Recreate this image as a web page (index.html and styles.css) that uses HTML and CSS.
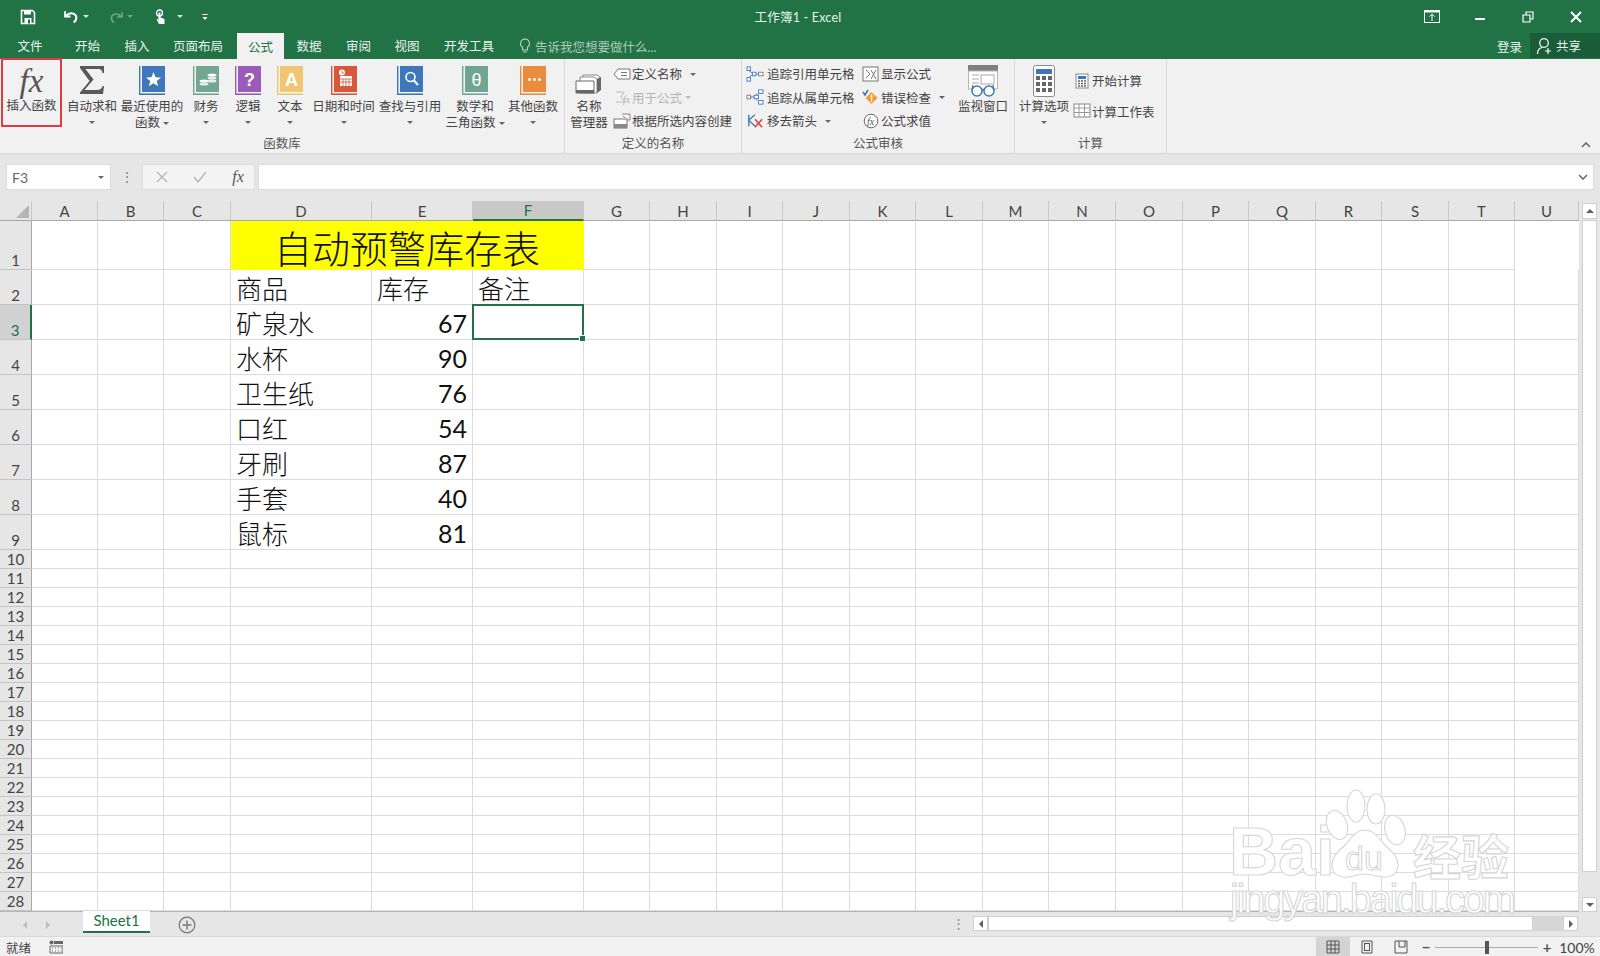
FILE: index.html
```html
<!DOCTYPE html>
<html lang="zh-CN">
<head>
<meta charset="utf-8">
<title>工作簿1 - Excel</title>
<link rel="stylesheet" href="styles.css">
</head>
<body>
<svg class="defs" width="0" height="0">
  <symbol id="book" viewBox="0 0 26 30">
    <rect width="1.4" height="28" fill="currentColor"/>
    <rect x="3" width="23" height="26" fill="currentColor"/>
    <rect x="1.4" y="26" width="24.6" height="1" fill="#fff" opacity=".7"/>
    <rect y="27.4" width="26" height="1.6" fill="currentColor"/>
  </symbol>
</svg>
<div class="app">
  <header class="titlebar">
    <div class="qat">
      <svg class="ti t-save" viewBox="0 0 16 16"><path d="M1.5 1.5h11l2 2v11h-13z" fill="none" stroke="#fff" stroke-width="1.6"/><rect x="4" y="1.5" width="7" height="4" fill="#fff"/><rect x="4.5" y="9" width="7" height="5.5" fill="#fff"/><rect x="8" y="10.5" width="2" height="4" fill="#217346"/></svg>
      <svg class="ti t-undo" viewBox="0 0 16 16"><path d="M2 3v5h5" fill="none" stroke="#fff" stroke-width="1.8"/><path d="M3 7.5c2-3 7-3.500 9-.5 1.200 2 .5 5-2 6.500" fill="none" stroke="#fff" stroke-width="2"/></svg>
      <i class="tcaret c-undo"></i>
      <svg class="ti t-redo" viewBox="0 0 16 16"><path d="M14 3v5H9" fill="none" stroke="#6fa587" stroke-width="1.6"/><path d="M13 7.500c-2-3-7-3.500-9-.5-1.200 2-.5 5 2 6.500" fill="none" stroke="#6fa587" stroke-width="1.600"/></svg>
      <i class="tcaret dim c-redo"></i>
      <svg class="ti t-touch" viewBox="0 0 16 16"><circle cx="6.500" cy="4" r="3" fill="none" stroke="#fff" stroke-width="1.300"/><path d="M5.500 3.500h2v5l4 1.500v5H6L3.500 10l2 .5z" fill="#fff"/></svg>
      <i class="tcaret c-touch"></i>
      <svg class="ti t-more" viewBox="0 0 10 10"><rect x="2.500" y="2" width="5" height="1" fill="#fff"/><path d="M2.500 5h5L5 8z" fill="#fff"/></svg>
    </div>
    <div class="doc-title">工作簿1 - Excel</div>
    <div class="winbtns">
      <svg class="wb" viewBox="0 0 16 14"><rect x=".5" y=".5" width="15" height="12" fill="none" stroke="#fff"/><rect x="1" y="1" width="14" height="1.500" fill="#fff"/><path d="M8 4v7M5.500 6.500 8 4l2.500 2.500" fill="none" stroke="#fff"/></svg>
      <svg class="wb" viewBox="0 0 16 14"><rect x="3" y="8" width="10" height="2" fill="#fff"/></svg>
      <svg class="wb" viewBox="0 0 16 14"><path d="M3 5h7v7H3zM6 5V2h7v7h-3" fill="none" stroke="#fff" stroke-width="1.200"/></svg>
      <svg class="wb" viewBox="0 0 16 14"><path d="M3 2l10 10M13 2 3 12" stroke="#fff" stroke-width="2"/></svg>
    </div>
  </header>

  <nav class="tabs">
    <span class="tab">文件</span>
    <span class="tab">开始</span>
    <span class="tab">插入</span>
    <span class="tab">页面布局</span>
    <span class="tab active">公式</span>
    <span class="tab">数据</span>
    <span class="tab">审阅</span>
    <span class="tab">视图</span>
    <span class="tab">开发工具</span>
    <span class="tellme">
      <svg class="bulb" viewBox="0 0 12 16"><path d="M6 1a4.500 4.500 0 0 0-2.500 8.200V12h5V9.200A4.500 4.500 0 0 0 6 1zM4 14h4" fill="none" stroke="#b9d3c4" stroke-width="1.100"/></svg>
      告诉我您想要做什么...
    </span>
    <span class="login">登录</span>
    <span class="share">
      <svg class="shareicon" viewBox="0 0 18 18"><circle cx="8" cy="6" r="4.300" fill="none" stroke="#fff" stroke-width="1.200"/><path d="M1.500 17c0-4 2-6 4.500-6.500M12 11v6M9 14h6" fill="none" stroke="#fff" stroke-width="1.200"/></svg>
      共享
    </span>
  </nav>

  <section class="ribbon">
    <div class="group g-lib">
      <div class="lib-btns">
        <div class="btn insert">
          <span class="fx-big">fx</span>
          <span class="lbl">插入函数</span>
        </div>
        <div class="btn">
          <svg class="icon sigma" viewBox="0 0 26 28"><path d="M1 0h24v7h-1.500c-.5-2.500-1.500-4-4-4H6.500l8 10.500L5.500 24H18c3 0 5-1.500 5.500-4H25l-1 8H1v-1.500L10.500 15 1 2z" fill="#595959"/></svg>
          <span class="lbl">自动求和</span>
          <i class="caret"></i>
        </div>
        <div class="btn">
          <svg class="icon book b-blue" viewBox="0 0 26 30"><use href="#book"/><path d="M14.500 6l2 5.200 5.500.3-4.300 3.400 1.500 5.400-4.700-3-4.700 3 1.500-5.400L7 11.500l5.500-.3z" fill="#fff"/></svg>
          <span class="lbl">最近使用的</span>
          <span class="lbl">函数<i class="caret inl"></i></span>
        </div>
        <div class="btn">
          <svg class="icon book b-green" viewBox="0 0 26 30"><use href="#book"/><g fill="#fff"><ellipse cx="19" cy="9" rx="4.500" ry="1.600"/><ellipse cx="19" cy="12" rx="4.500" ry="1.600" opacity=".8"/><ellipse cx="19" cy="15" rx="4.500" ry="1.600" opacity=".8"/><ellipse cx="11" cy="15" rx="4.500" ry="1.600"/><ellipse cx="11" cy="18" rx="4.500" ry="1.600" opacity=".8"/></g></svg>
          <span class="lbl">财务</span>
          <i class="caret"></i>
        </div>
        <div class="btn">
          <svg class="icon book b-purple" viewBox="0 0 26 30"><use href="#book"/><text x="14.500" y="20" class="bk-t bold">?</text></svg>
          <span class="lbl">逻辑</span>
          <i class="caret"></i>
        </div>
        <div class="btn">
          <svg class="icon book b-yellow" viewBox="0 0 26 30"><use href="#book"/><text x="14.500" y="20" class="bk-t bold">A</text></svg>
          <span class="lbl">文本</span>
          <i class="caret"></i>
        </div>
        <div class="btn">
          <svg class="icon book b-red" viewBox="0 0 26 30"><use href="#book"/><circle cx="11" cy="6.500" r="3" fill="#fff"/><path d="M11 5v2h2" stroke="#d9573a" fill="none" stroke-width=".8"/><rect x="9" y="10" width="12" height="10" fill="#fff"/><path d="M9 13h12M9 16h12M12 13v7M15 13v7M18 13v7" stroke="#d9573a" stroke-width=".8"/></svg>
          <span class="lbl">日期和时间</span>
          <i class="caret"></i>
        </div>
        <div class="btn">
          <svg class="icon book b-blue" viewBox="0 0 26 30"><use href="#book"/><circle cx="13.500" cy="11" r="4.500" fill="none" stroke="#fff" stroke-width="1.600"/><path d="M17 14.500l4 4.500" stroke="#fff" stroke-width="2"/></svg>
          <span class="lbl">查找与引用</span>
          <i class="caret"></i>
        </div>
        <div class="btn">
          <svg class="icon book b-teal" viewBox="0 0 26 30"><use href="#book"/><text x="14.500" y="19.500" class="bk-t">θ</text></svg>
          <span class="lbl">数学和</span>
          <span class="lbl">三角函数<i class="caret inl"></i></span>
        </div>
        <div class="btn">
          <svg class="icon book b-orange" viewBox="0 0 26 30"><use href="#book"/><circle cx="9.500" cy="13.500" r="1.500" fill="#fff"/><circle cx="14.500" cy="13.500" r="1.500" fill="#fff"/><circle cx="19.500" cy="13.500" r="1.500" fill="#fff"/></svg>
          <span class="lbl">其他函数</span>
          <i class="caret"></i>
        </div>
      </div>
      <div class="glabel">函数库</div>
    </div>

    <div class="group g-names">
      <div class="gbody">
        <div class="btn nm">
          <svg class="icon nmicon" viewBox="0 0 30 30"><path d="M9 7h14l3 2v12H9z" fill="#fff" stroke="#8a8a8a"/><path d="M6 9h14l3 2v14H6z" fill="#fff" stroke="#8a8a8a"/><path d="M2 13h18v12H2z" fill="#fff" stroke="#666"/><path d="M23 11v14l4-3V9z" fill="#666"/><rect x="2" y="22" width="18" height="3" fill="#666"/></svg>
          <span class="lbl">名称</span>
          <span class="lbl">管理器</span>
        </div>
        <div class="smalls">
          <div class="sm"><svg class="si" viewBox="0 0 18 16"><path d="M5 3h12v10H5L1 8z" fill="#fff" stroke="#777"/><path d="M8 6.500h6M8 9.500h6" stroke="#777"/></svg>定义名称<i class="caret inl wide"></i></div>
          <div class="sm off"><svg class="si" viewBox="0 0 18 16"><path d="M3 3h8L8 8l4 5H3" fill="none" stroke="#bbb"/><text x="10" y="14" class="si-t off-t">fx</text></svg>用于公式<i class="caret inl off-c"></i></div>
          <div class="sm"><svg class="si" viewBox="0 0 18 16"><rect x="1" y="6" width="13" height="9" fill="#fff" stroke="#777"/><rect x="1" y="11" width="13" height="4" fill="#888"/><path d="M9 1h8v6h-3" fill="none" stroke="#888"/><path d="M10 3l2 2" stroke="#888"/></svg>根据所选内容创建</div>
        </div>
      </div>
      <div class="glabel">定义的名称</div>
    </div>

    <div class="group g-audit">
      <div class="gbody">
        <div class="smalls col-a">
          <div class="sm"><svg class="si" viewBox="0 0 20 18"><rect x="1" y="1" width="4" height="4" fill="#fff" stroke="#3f77ba"/><rect x="1" y="13" width="4" height="4" fill="#fff" stroke="#3f77ba"/><rect x="7" y="7" width="4" height="4" fill="#fff" stroke="#3f77ba"/><rect x="14" y="7" width="5" height="4" fill="#fff" stroke="#777"/><path d="M3 5l4 3M3 13l4-3M11 9h3" stroke="#3f77ba"/></svg>追踪引用单元格</div>
          <div class="sm"><svg class="si" viewBox="0 0 20 18"><rect x="1" y="7" width="4" height="4" fill="#fff" stroke="#777"/><rect x="14" y="1" width="5" height="4" fill="#fff" stroke="#3f77ba"/><rect x="14" y="13" width="5" height="4" fill="#fff" stroke="#3f77ba"/><rect x="9" y="7" width="5" height="4" fill="#fff" stroke="#3f77ba"/><path d="M5 9h4M12 5v2M12 11v2" stroke="#3f77ba"/></svg>追踪从属单元格</div>
          <div class="sm"><svg class="si" viewBox="0 0 20 18"><path d="M3 2v13M3 8l7-6M3 8l7 7" stroke="#3f77ba" stroke-width="1.500" fill="none"/><path d="M10 7l8 9M18 7l-8 9" stroke="#d9473a" stroke-width="1.800"/></svg>移去箭头<i class="caret inl wide"></i></div>
        </div>
        <div class="smalls col-b">
          <div class="sm"><svg class="si" viewBox="0 0 18 16"><rect x="1" y="1" width="15" height="14" fill="#fff" stroke="#777"/><path d="M4 4l4 4-4 4M9 4l5 9M14 4l-5 9" stroke="#777" fill="none"/></svg>显示公式</div>
          <div class="sm"><svg class="si" viewBox="0 0 18 16"><path d="M9.500 3l6 6-6 6-6-6z" fill="#f0a030"/><rect x="8.800" y="5.500" width="1.500" height="5" fill="#fff"/><rect x="8.800" y="11.300" width="1.500" height="1.500" fill="#fff"/><path d="M1 3l2 3 3-5" stroke="#3f77ba" stroke-width="1.600" fill="none"/></svg>错误检查<i class="caret inl wide"></i></div>
          <div class="sm"><svg class="si" viewBox="0 0 18 16"><circle cx="9" cy="8" r="6.800" fill="#fff" stroke="#666"/><text x="5" y="12" class="si-t">fx</text></svg>公式求值</div>
        </div>
        <div class="btn watch">
          <svg class="icon wicon" viewBox="0 0 30 32"><rect width="30" height="6" fill="#7f7f7f"/><rect x=".5" y="6" width="29" height="18" fill="#fff" stroke="#b5b5b5"/><path d="M4 10h7M4 14h7M4 18h7" stroke="#aaa"/><rect x="13" y="10" width="13" height="9" fill="none" stroke="#aaa"/><circle cx="9" cy="26" r="5" fill="#fff" stroke="#3f77ba" stroke-width="1.500"/><circle cx="21" cy="26" r="5" fill="#fff" stroke="#3f77ba" stroke-width="1.500"/><path d="M14 25h2M4 25l1-5M26 25l-1-5" stroke="#3f77ba" stroke-width="1.300"/></svg>
          <span class="lbl">监视窗口</span>
        </div>
      </div>
      <div class="glabel">公式审核</div>
    </div>

    <div class="group g-calc">
      <div class="gbody">
        <div class="btn calc">
          <svg class="icon cicon" viewBox="0 0 22 32"><rect x=".5" y=".5" width="21" height="31" rx="2" fill="#fff" stroke="#8a8a8a"/><rect x="3" y="4" width="16" height="5" fill="#3f77ba"/><g fill="#666"><rect x="3" y="11" width="4" height="4"/><rect x="9" y="11" width="4" height="4"/><rect x="15" y="11" width="4" height="4"/><rect x="3" y="17" width="4" height="4"/><rect x="9" y="17" width="4" height="4"/><rect x="15" y="17" width="4" height="4"/><rect x="3" y="23" width="4" height="4"/><rect x="9" y="23" width="4" height="4"/><rect x="15" y="23" width="4" height="4"/></g></svg>
          <span class="lbl">计算选项</span>
          <i class="caret"></i>
        </div>
        <div class="smalls calc-s">
          <div class="sm"><svg class="si" viewBox="0 0 18 16"><rect x="3" y="1" width="12" height="14" fill="#fff" stroke="#888"/><rect x="5" y="3" width="8" height="3" fill="#3f77ba"/><path d="M5 8h8M5 10.500h8M5 13h8" stroke="#666" stroke-width="1.300" stroke-dasharray="2 1"/></svg>开始计算</div>
          <div class="sm"><svg class="si" viewBox="0 0 18 16"><rect x="1" y="1" width="16" height="13" fill="#fff" stroke="#888"/><path d="M1 5h16M1 9.500h16M6 1v13M11.500 1v13" stroke="#999"/></svg>计算工作表</div>
        </div>
      </div>
      <div class="glabel">计算</div>
    </div>
    <svg class="collapse" viewBox="0 0 10 6"><path d="M1 5l4-4 4 4" fill="none" stroke="#666" stroke-width="1.500"/></svg>
  </section>

  <section class="fbar">
    <div class="namebox">F3<i class="caret"></i></div>
    <span class="fdots">⋮</span>
    <div class="fbtns">
      <svg class="fb" viewBox="0 0 12 12"><path d="M1 1l10 10M11 1 1 11" stroke="#b8b8b8" stroke-width="1.400"/></svg>
      <svg class="fb" viewBox="0 0 14 12"><path d="M1 6l4 5 8-10" fill="none" stroke="#b8b8b8" stroke-width="1.500"/></svg>
      <span class="fxs">fx</span>
    </div>
    <div class="finput"><svg class="fdown" viewBox="0 0 10 6"><path d="M1 1l4 4 4-4" fill="none" stroke="#666" stroke-width="1.500"/></svg></div>
  </section>

  <section class="sheet">
    <div class="gridwrap">
      <table class="grid">
        <colgroup>
          <col class="w32"><col class="w66"><col class="w66"><col class="w67"><col class="w141"><col class="w101"><col class="w111"><col class="w66"><col class="w67"><col class="w66"><col class="w67"><col class="w66"><col class="w67"><col class="w66"><col class="w67"><col class="w67"><col class="w66"><col class="w67"><col class="w66"><col class="w67"><col class="w66"><col class="w64">
        </colgroup>
        <thead>
          <tr><th class="corner"><i></i></th><th>A</th><th>B</th><th>C</th><th>D</th><th>E</th><th class="sel-col">F</th><th>G</th><th>H</th><th>I</th><th>J</th><th>K</th><th>L</th><th>M</th><th>N</th><th>O</th><th>P</th><th>Q</th><th>R</th><th>S</th><th>T</th><th>U</th></tr>
        </thead>
        <tbody>
          <tr class="r1"><th class="bt">1</th><td></td><td></td><td></td><td colspan="3" class="banner">自动预警库存表</td><td></td><td></td><td></td><td></td><td></td><td></td><td></td><td></td><td></td><td></td><td></td><td></td><td></td><td></td></tr>
          <tr class="r2"><th class="bt">2</th><td></td><td></td><td></td><td class="v">商品</td><td class="v">库存</td><td class="v">备注</td><td></td><td></td><td></td><td></td><td></td><td></td><td></td><td></td><td></td><td></td><td></td><td></td><td></td><td></td><td></td></tr>
          <tr class="r2"><th class="bt sel-row">3</th><td></td><td></td><td></td><td class="v">矿泉水</td><td class="v n">67</td><td class="active-cell"></td><td></td><td></td><td></td><td></td><td></td><td></td><td></td><td></td><td></td><td></td><td></td><td></td><td></td><td></td><td></td></tr>
          <tr class="r2"><th class="bt">4</th><td></td><td></td><td></td><td class="v">水杯</td><td class="v n">90</td><td></td><td></td><td></td><td></td><td></td><td></td><td></td><td></td><td></td><td></td><td></td><td></td><td></td><td></td><td></td><td></td></tr>
          <tr class="r2"><th class="bt">5</th><td></td><td></td><td></td><td class="v">卫生纸</td><td class="v n">76</td><td></td><td></td><td></td><td></td><td></td><td></td><td></td><td></td><td></td><td></td><td></td><td></td><td></td><td></td><td></td><td></td></tr>
          <tr class="r2"><th class="bt">6</th><td></td><td></td><td></td><td class="v">口红</td><td class="v n">54</td><td></td><td></td><td></td><td></td><td></td><td></td><td></td><td></td><td></td><td></td><td></td><td></td><td></td><td></td><td></td><td></td></tr>
          <tr class="r2"><th class="bt">7</th><td></td><td></td><td></td><td class="v">牙刷</td><td class="v n">87</td><td></td><td></td><td></td><td></td><td></td><td></td><td></td><td></td><td></td><td></td><td></td><td></td><td></td><td></td><td></td><td></td></tr>
          <tr class="r2"><th class="bt">8</th><td></td><td></td><td></td><td class="v">手套</td><td class="v n">40</td><td></td><td></td><td></td><td></td><td></td><td></td><td></td><td></td><td></td><td></td><td></td><td></td><td></td><td></td><td></td><td></td></tr>
          <tr class="r2"><th class="bt">9</th><td></td><td></td><td></td><td class="v">鼠标</td><td class="v n">81</td><td></td><td></td><td></td><td></td><td></td><td></td><td></td><td></td><td></td><td></td><td></td><td></td><td></td><td></td><td></td><td></td></tr>
          <tr><th>10</th><td></td><td></td><td></td><td></td><td></td><td></td><td></td><td></td><td></td><td></td><td></td><td></td><td></td><td></td><td></td><td></td><td></td><td></td><td></td><td></td><td></td></tr>
          <tr><th>11</th><td></td><td></td><td></td><td></td><td></td><td></td><td></td><td></td><td></td><td></td><td></td><td></td><td></td><td></td><td></td><td></td><td></td><td></td><td></td><td></td><td></td></tr>
          <tr><th>12</th><td></td><td></td><td></td><td></td><td></td><td></td><td></td><td></td><td></td><td></td><td></td><td></td><td></td><td></td><td></td><td></td><td></td><td></td><td></td><td></td><td></td></tr>
          <tr><th>13</th><td></td><td></td><td></td><td></td><td></td><td></td><td></td><td></td><td></td><td></td><td></td><td></td><td></td><td></td><td></td><td></td><td></td><td></td><td></td><td></td><td></td></tr>
          <tr><th>14</th><td></td><td></td><td></td><td></td><td></td><td></td><td></td><td></td><td></td><td></td><td></td><td></td><td></td><td></td><td></td><td></td><td></td><td></td><td></td><td></td><td></td></tr>
          <tr><th>15</th><td></td><td></td><td></td><td></td><td></td><td></td><td></td><td></td><td></td><td></td><td></td><td></td><td></td><td></td><td></td><td></td><td></td><td></td><td></td><td></td><td></td></tr>
          <tr><th>16</th><td></td><td></td><td></td><td></td><td></td><td></td><td></td><td></td><td></td><td></td><td></td><td></td><td></td><td></td><td></td><td></td><td></td><td></td><td></td><td></td><td></td></tr>
          <tr><th>17</th><td></td><td></td><td></td><td></td><td></td><td></td><td></td><td></td><td></td><td></td><td></td><td></td><td></td><td></td><td></td><td></td><td></td><td></td><td></td><td></td><td></td></tr>
          <tr><th>18</th><td></td><td></td><td></td><td></td><td></td><td></td><td></td><td></td><td></td><td></td><td></td><td></td><td></td><td></td><td></td><td></td><td></td><td></td><td></td><td></td><td></td></tr>
          <tr><th>19</th><td></td><td></td><td></td><td></td><td></td><td></td><td></td><td></td><td></td><td></td><td></td><td></td><td></td><td></td><td></td><td></td><td></td><td></td><td></td><td></td><td></td></tr>
          <tr><th>20</th><td></td><td></td><td></td><td></td><td></td><td></td><td></td><td></td><td></td><td></td><td></td><td></td><td></td><td></td><td></td><td></td><td></td><td></td><td></td><td></td><td></td></tr>
          <tr><th>21</th><td></td><td></td><td></td><td></td><td></td><td></td><td></td><td></td><td></td><td></td><td></td><td></td><td></td><td></td><td></td><td></td><td></td><td></td><td></td><td></td><td></td></tr>
          <tr><th>22</th><td></td><td></td><td></td><td></td><td></td><td></td><td></td><td></td><td></td><td></td><td></td><td></td><td></td><td></td><td></td><td></td><td></td><td></td><td></td><td></td><td></td></tr>
          <tr><th>23</th><td></td><td></td><td></td><td></td><td></td><td></td><td></td><td></td><td></td><td></td><td></td><td></td><td></td><td></td><td></td><td></td><td></td><td></td><td></td><td></td><td></td></tr>
          <tr><th>24</th><td></td><td></td><td></td><td></td><td></td><td></td><td></td><td></td><td></td><td></td><td></td><td></td><td></td><td></td><td></td><td></td><td></td><td></td><td></td><td></td><td></td></tr>
          <tr><th>25</th><td></td><td></td><td></td><td></td><td></td><td></td><td></td><td></td><td></td><td></td><td></td><td></td><td></td><td></td><td></td><td></td><td></td><td></td><td></td><td></td><td></td></tr>
          <tr><th>26</th><td></td><td></td><td></td><td></td><td></td><td></td><td></td><td></td><td></td><td></td><td></td><td></td><td></td><td></td><td></td><td></td><td></td><td></td><td></td><td></td><td></td></tr>
          <tr><th>27</th><td></td><td></td><td></td><td></td><td></td><td></td><td></td><td></td><td></td><td></td><td></td><td></td><td></td><td></td><td></td><td></td><td></td><td></td><td></td><td></td><td></td></tr>
          <tr><th>28</th><td></td><td></td><td></td><td></td><td></td><td></td><td></td><td></td><td></td><td></td><td></td><td></td><td></td><td></td><td></td><td></td><td></td><td></td><td></td><td></td><td></td></tr>
        </tbody>
      </table>
    </div>
    <div class="vscroll">
      <div class="sbtn"><i class="tri up"></i></div>
      <div class="vthumb"></div>
      <div class="sbtn down"><i class="tri dn"></i></div>
    </div>
  </section>

  <section class="sheetbar">
    <i class="nav lft"></i>
    <i class="nav rgt"></i>
    <span class="sheettab">Sheet1</span>
    <svg class="addsheet" viewBox="0 0 18 18"><circle cx="9" cy="9" r="7.800" fill="none" stroke="#777" stroke-width="1.200"/><path d="M9 4.500v9M4.500 9h9" stroke="#777" stroke-width="1.400"/></svg>
    <div class="hscroll">
      <span class="hdots">⋮</span>
      <div class="sbtn h"><i class="tri lf"></i></div>
      <div class="hthumb"></div>
      <div class="sbtn h right"><i class="tri rt"></i></div>
    </div>
  </section>

  <footer class="status">
    <span class="ready">就绪</span>
    <svg class="macro" viewBox="0 0 14 14"><circle cx="2.500" cy="2.500" r="2" fill="#666"/><rect x="5" y="1" width="9" height="3" fill="#666"/><path d="M1 6h13v7H1z" fill="none" stroke="#666"/><path d="M3 8h1M6 8h1M9 8h1M12 8h1M3 11h1M6 11h1M9 11h1M12 11h1" stroke="#666"/></svg>
    <div class="status-right">
      <div class="vw on"><svg class="vi" viewBox="0 0 14 14"><path d="M1 1h12v12H1zM1 5h12M1 9h12M5 1v12M9 1v12" fill="none" stroke="#555"/></svg></div>
      <div class="vw"><svg class="vi" viewBox="0 0 14 14"><path d="M2 1h10v12H2z" fill="none" stroke="#555"/><rect x="4.500" y="3.500" width="5" height="7" fill="none" stroke="#555"/></svg></div>
      <div class="vw"><svg class="vi" viewBox="0 0 14 14"><path d="M1 1h12v12H1zM5 1v6h6V1" fill="none" stroke="#555"/></svg></div>
      <div class="zoom">
        <span class="zm">−</span>
        <span class="slider"><i></i></span>
        <span class="zm">+</span>
      </div>
      <span class="pct">100%</span>
    </div>
  </footer>

  <svg class="watermark" viewBox="0 0 300 150">
    <g class="wm">
      <text x="4" y="95" class="wm-big">Bai</text>
      <ellipse cx="112" cy="45" rx="10" ry="15" transform="rotate(-20 112 45)"/>
      <ellipse cx="131" cy="26" rx="9" ry="16"/>
      <ellipse cx="151" cy="29" rx="9" ry="15"/>
      <ellipse cx="170" cy="50" rx="10" ry="15" transform="rotate(-15 170 50)"/>
      <path d="M140 50c-10 0-14 9-20 15-6 6-13 11-13 20 0 10 8 13 16 12 7-1 11-3 17-3s10 2 17 3c8 1 16-2 16-12 0-9-7-14-13-20-6-6-10-15-20-15z"/>
      <text x="120" y="90" class="wm-du">du</text>
      <text x="188" y="95" class="wm-cn">经验</text>
      <text x="5" y="133" class="wm-url" textLength="286">jingyan.baidu.com</text>
    </g>
  </svg>
</div>
</body>
</html>
```
FILE: styles.css
```css
* { box-sizing: border-box; }
html, body { margin: 0; padding: 0; height: 100%; background: #f1f1f1; }
body { font-family: Lato, "Noto Sans CJK SC", sans-serif; color: #444; overflow: hidden; }
.defs { position: absolute; }
i { display: block; font-style: normal; }

.app { position: relative; width: 1600px; height: 956px; display: flex; flex-direction: column; overflow: hidden; }

/* title bar */
.titlebar { flex: 0 0 33px; background: #217346; display: grid; grid-template-columns: 600px 396px 1fr; align-items: center; color: #e9f2ed; }
.qat { display: flex; align-items: center; height: 33px; padding-left: 20px; }
.ti { display: block; width: 16px; height: 16px; }
.t-undo { margin-left: 27px; width: 17px; height: 17px; }
.t-redo { margin-left: 19px; }
.t-touch { margin-left: 20px; }
.t-more { margin-left: 17px; width: 10px; height: 10px; }
.c-undo { margin-left: 3px; }
.c-redo { margin-left: 3px; }
.c-touch { margin-left: 8px; }
.tcaret { width: 0; height: 0; border: 3px solid transparent; border-top-color: #d7e6dd; border-bottom: 0; }
.tcaret.dim { border-top-color: #6fa587; }
.doc-title { text-align: center; font-size: 12.5px; letter-spacing: .2px; }
.winbtns { display: grid; grid-template-columns: 48px 48px 48px 48px; justify-content: end; justify-items: center; padding-right: 0; }
.wb { width: 16px; height: 14px; display: block; }

/* tabs */
.tabs { flex: 0 0 26px; background: #217346; display: grid; grid-template-columns: 60px 55px 44px 78px 47px 50px 49px 48px 76px auto 1fr auto auto; align-items: stretch; color: #eaf3ee; font-size: 12.5px; }
.tab { display: flex; align-items: center; justify-content: center; height: 25px; }
.tab.active { background: #f1f1f1; color: #217346; height: 26px; }
.tellme { display: flex; align-items: center; gap: 4px; margin-left: 12px; color: #aecabb; }
.bulb { width: 12px; height: 16px; }
.login { grid-column: 12; display: flex; align-items: center; padding-right: 8px; }
.share { grid-column: 13; width: 70px; height: 25px; background: #195c38; display: flex; align-items: center; gap: 2px; padding-left: 6px; }
.shareicon { width: 18px; height: 18px; }

/* ribbon */
.ribbon { flex: 0 0 95px; background: #f1f1f1; border-bottom: 1px solid #d6d6d6; display: flex; position: relative; font-size: 12.5px; color: #444; }
.group { display: flex; flex-direction: column; height: 94px; border-right: 1px solid #d8d8d8; }
.g-lib { width: 565px; }
.g-names { width: 177px; }
.g-audit { width: 273px; }
.g-calc { width: 152px; }
.lib-btns { display: grid; grid-template-columns: 60px 64px 56px 52px 32px 52px 55px 78px 52px 64px; height: 76px; }
.gbody { display: flex; height: 76px; }
.glabel { text-align: center; font-size: 12.5px; line-height: 16px; color: #555; margin-top: 1px; }
.btn { display: flex; flex-direction: column; align-items: center; padding-top: 7px; white-space: nowrap; }
.icon { display: block; flex: 0 0 30px; width: 26px; height: 30px; margin-bottom: 3px; }
.lbl { display: flex; align-items: center; height: 16px; line-height: 16px; }
.caret { width: 0; height: 0; border: 3px solid transparent; border-top-color: #666; border-bottom: 0; margin-top: 6px; }
.caret.inl { display: inline-block; margin: 1px 0 0 3px; }
.caret.wide { margin-left: 8px; }
.off-c { border-top-color: #bbb; }
.insert { width: 61px; margin-left: 1px; height: 69px; margin-top: -1px; padding-top: 4px; border: 2px solid #dc3c42; position: relative; }
.fx-big { font-family: "Liberation Serif", serif; font-style: italic; font-size: 33px; line-height: 34px; height: 34px; margin-bottom: 0; color: #555; }
.sigma { height: 28px; flex-basis: 28px; margin-bottom: 5px; }
.book { color: #3f77ba; }
.b-blue { color: #3f77ba; }
.b-green { color: #72a690; }
.b-purple { color: #9a5cb8; }
.b-yellow { color: #f1c574; }
.b-red { color: #d9573a; }
.b-teal { color: #6fa592; }
.b-orange { color: #e98c3e; }
.bk-t { font-family: "Liberation Sans", sans-serif; font-size: 18px; fill: #fff; text-anchor: middle; }
.bold { font-weight: 700; }

.nm { width: 48px; padding-top: 9px; }
.nmicon { width: 30px; flex-basis: 30px; margin-bottom: 1px; }
.smalls { display: flex; flex-direction: column; padding-top: 3px; }
.sm { display: flex; align-items: center; height: 23.5px; white-space: nowrap; }
.si { display: block; width: 18px; height: 16px; margin-right: 1px; flex: none; }
.si-t { font-family: "Liberation Serif", serif; font-style: italic; font-size: 10px; fill: #555; }
.off { color: #b4b4b4; }
.off-t { fill: #b4b4b4; }
.col-a { width: 120px; padding-left: 3px; }
.col-a .si { width: 20px; margin-right: 2px; }
.col-b { width: 90px; }
.watch { width: 62px; padding-top: 6px; }
.wicon { width: 30px; height: 32px; flex-basis: 32px; margin-bottom: 2px; }
.calc { width: 58px; padding-top: 6px; }
.cicon { width: 22px; height: 32px; flex-basis: 32px; margin-bottom: 2px; }
.calc-s { padding-top: 10px; gap: 7px; }
.collapse { position: absolute; right: 9px; bottom: 5px; width: 10px; height: 6px; }

/* formula bar */
.fbar { flex: 0 0 47px; background: #e6e6e6; display: flex; align-items: flex-start; padding: 10px 6px 0 6px; }
.namebox { width: 105px; height: 26px; background: #fff; display: flex; align-items: center; justify-content: space-between; padding: 0 6px 0 5px; font-size: 14px; color: #666; border: 1px solid #dcdcdc; }
.namebox .caret { margin: 0; }
.fdots { width: 31px; text-align: center; line-height: 26px; font-size: 14px; color: #888; }
.fbtns { width: 113px; height: 26px; background: #f4f4f4; border: 1px solid #dcdcdc; display: grid; grid-template-columns: 38px 38px 38px; align-items: center; justify-items: center; padding-left: 0; }
.fb { width: 14px; height: 12px; display: block; }
.fxs { font-family: "Liberation Serif", serif; font-style: italic; font-size: 16px; line-height: 1; color: #555; }
.finput { flex: 1; height: 26px; margin-left: 3px; background: #fff; border: 1px solid #dcdcdc; position: relative; }
.fdown { position: absolute; right: 5px; top: 9px; width: 10px; height: 6px; }

/* sheet */
.sheet { flex: 0 0 711px; display: flex; background: #fff; }
.gridwrap { width: 1579px; height: 711px; overflow: hidden; border-bottom: 1px solid #b5b5b5; flex: none; }
.grid { table-layout: fixed; width: 1579px; border-collapse: separate; border-spacing: 0; }
.w32 { width: 32px; } .w64 { width: 64px; } .w66 { width: 66px; } .w67 { width: 67px; }
.w141 { width: 141px; } .w101 { width: 101px; } .w111 { width: 111px; }
.grid th { background: #e6e6e6; font-weight: 400; font-size: 15px; color: #444; padding: 0; height: 19px; line-height: 18px; }
.grid thead th { border-right: 1px solid #c8c8c8; border-bottom: 1px solid #a8a8a8; height: 19px; }
.grid tbody th { border-bottom: 1px solid #c4c4c4; border-right: 1px solid #a8a8a8; text-align: center; }
.grid tbody th.bt { vertical-align: bottom; }
.corner { position: relative; }
.corner i { position: absolute; right: 2px; bottom: 2px; width: 0; height: 0; border-left: 13px solid transparent; border-bottom: 13px solid #b5b5b5; }
.grid thead .sel-col { background: #c8c8c8; color: #217346; border-bottom: 2px solid #217346; }
.grid tbody .sel-row { background: #d2d2d2; color: #217346; border-right: 2px solid #217346; }
.grid td { height: 19px; padding: 0; border-right: 1px solid #dcdcdc; border-bottom: 1px solid #dcdcdc; }
.r1 th, .r1 td { height: 49px; }
.r2 th, .r2 td { height: 35px; }
.grid td.banner { background: #ffff00; text-align: center; vertical-align: bottom; font-size: 38px; line-height: 44px; font-weight: 300; color: #111; font-family: "Noto Sans CJK SC", sans-serif; border-color: #ffff00; }
.grid td.v { font-size: 26px; line-height: 32px; font-weight: 300; vertical-align: bottom; color: #111; padding-left: 5px; font-family: "Noto Sans CJK SC", sans-serif; }
.grid td.n { text-align: right; padding: 0 5px 0 0; font-family: Lato, sans-serif; font-weight: 400; font-size: 25px; }
.active-cell { position: relative; }
.active-cell::before { content: ""; position: absolute; left: -1px; top: -1px; right: -1px; bottom: -1px; border: 2px solid #217346; }
.active-cell::after { content: ""; position: absolute; right: -3px; bottom: -3px; width: 5px; height: 5px; background: #217346; border: 1px solid #fff; }

.vscroll { flex: 1; background: #e6e6e6; display: flex; flex-direction: column; align-items: center; padding-top: 2px; }
.sbtn { width: 15px; height: 16px; background: #fff; border: 1px solid #d0d0d0; display: flex; align-items: center; justify-content: center; flex: none; }
.sbtn.down { margin-top: auto; height: 15px; margin-bottom: 0; }
.vthumb { width: 15px; height: 652px; background: #fff; border: 1px solid #cfcfcf; margin-top: 1px; flex: none; }
.tri { width: 0; height: 0; border: 4px solid transparent; }
.tri.up { border-top: 0; border-bottom-color: #606060; }
.tri.dn { border-bottom: 0; border-top-color: #606060; }
.tri.lf { border-left: 0; border-right-color: #606060; }
.tri.rt { border-right: 0; border-left-color: #606060; }

/* sheet tabs */
.sheetbar { flex: 0 0 24px; background: #e6e6e6; display: flex; align-items: flex-start; position: relative; font-size: 15px; }
.nav { width: 0; height: 0; border: 4px solid transparent; margin-top: 9px; }
.nav.lft { border-left: 0; border-right-color: #bdbdbd; margin-left: 23px; }
.nav.rgt { border-right: 0; border-left-color: #bdbdbd; margin-left: 19px; }
.sheettab { width: 67px; height: 22px; margin-left: 33px; margin-top: -1px; background: #fff; color: #217346; text-align: center; line-height: 19px; border-bottom: 2px solid #217346; }
.addsheet { width: 18px; height: 18px; margin: 4px 0 0 28px; }
.hscroll { margin-left: auto; display: flex; align-items: center; margin-top: 4px; margin-right: 22px; background: #d6d6d6; }
.hdots { position: absolute; left: 952px; top: 3px; font-size: 13px; color: #888; line-height: 16px; }
.sbtn.h { height: 15px; width: 15px; }
.hthumb { width: 545px; height: 15px; background: #fff; border: 1px solid #cfcfcf; }
.sbtn.right { margin-left: 30px; }

/* status */
.status { flex: 1; background: #f1f1f1; border-top: 1px solid #d8d8d8; display: flex; align-items: center; font-size: 12.5px; color: #444; padding-left: 6px; }
.macro { width: 14px; height: 14px; margin-left: 18px; }
.status-right { margin-left: auto; display: flex; align-items: center; height: 100%; }
.vw { width: 34px; height: 20px; display: flex; align-items: center; justify-content: center; }
.vw.on { background: #d4d4d4; }
.vi { width: 14px; height: 14px; }
.zoom { display: flex; align-items: center; margin-left: 1px; width: 135px; }
.zm { width: 14px; text-align: center; font-size: 15px; font-weight: 700; color: #555; line-height: 16px; }
.slider { flex: 1; height: 1px; background: #aaa; position: relative; margin: 0 2px; }
.slider i { position: absolute; left: 49%; top: -6px; width: 4px; height: 13px; background: #555; }
.pct { width: 46px; text-align: center; font-size: 14px; }

/* watermark */
.watermark { position: absolute; left: 1225px; top: 780px; width: 300px; height: 150px; pointer-events: none; }
.wm { fill: #ffffff; stroke: #d6d6d6; stroke-width: 1.100; }
.wm-big { font-family: "Liberation Sans", sans-serif; font-weight: 700; font-size: 68px; }
.wm-du { font-family: "Liberation Sans", sans-serif; font-size: 34px; }
.wm-cn { font-family: "Noto Sans CJK SC", sans-serif; font-weight: 700; font-size: 48px; }
.wm-url { font-family: "Liberation Sans", sans-serif; font-size: 40px; }
```
